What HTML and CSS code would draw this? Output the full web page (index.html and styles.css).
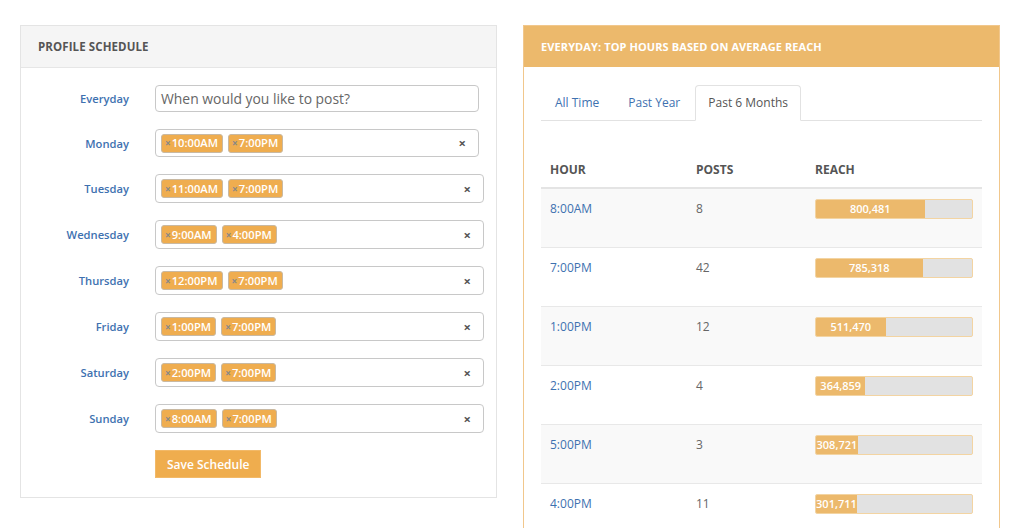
FILE: index.html
```html
<!DOCTYPE html>
<html>
<head>
<meta charset="utf-8">
<link rel="stylesheet" href="styles.css">
</head>
<body>
<div class="page">
  <section class="panel panel-default">
    <div class="panel-heading">PROFILE SCHEDULE</div>
    <div class="panel-body form">
      <div class="row">
        <label class="lbl">Everyday</label>
        <div class="input narrow"><span class="placeholder">When would you like to post?</span></div>
      </div>
      <div class="row">
        <label class="lbl">Monday</label>
        <div class="input select narrow h28"><span class="tag"><i>×</i>10:00AM</span><span class="tag"><i>×</i>7:00PM</span><span class="clear">×</span></div>
      </div>
      <div class="row">
        <label class="lbl">Tuesday</label>
        <div class="input select"><span class="tag"><i>×</i>11:00AM</span><span class="tag"><i>×</i>7:00PM</span><span class="clear">×</span></div>
      </div>
      <div class="row">
        <label class="lbl">Wednesday</label>
        <div class="input select"><span class="tag"><i>×</i>9:00AM</span><span class="tag"><i>×</i>4:00PM</span><span class="clear">×</span></div>
      </div>
      <div class="row">
        <label class="lbl">Thursday</label>
        <div class="input select"><span class="tag"><i>×</i>12:00PM</span><span class="tag"><i>×</i>7:00PM</span><span class="clear">×</span></div>
      </div>
      <div class="row">
        <label class="lbl">Friday</label>
        <div class="input select"><span class="tag"><i>×</i>1:00PM</span><span class="tag"><i>×</i>7:00PM</span><span class="clear">×</span></div>
      </div>
      <div class="row">
        <label class="lbl">Saturday</label>
        <div class="input select"><span class="tag"><i>×</i>2:00PM</span><span class="tag"><i>×</i>7:00PM</span><span class="clear">×</span></div>
      </div>
      <div class="row">
        <label class="lbl">Sunday</label>
        <div class="input select"><span class="tag"><i>×</i>8:00AM</span><span class="tag"><i>×</i>7:00PM</span><span class="clear">×</span></div>
      </div>
      <div class="row">
        <span></span>
        <div><button class="btn">Save Schedule</button></div>
      </div>
    </div>
  </section>

  <section class="panel panel-warning">
    <div class="panel-heading">EVERYDAY: TOP HOURS BASED ON AVERAGE REACH</div>
    <div class="panel-body">
      <ul class="tabs">
        <li class="tab">All Time</li>
        <li class="tab">Past Year</li>
        <li class="tab active">Past 6 Months</li>
      </ul>
      <table class="table">
        <thead>
          <tr><th class="c1">HOUR</th><th class="c2">POSTS</th><th class="c3">REACH</th></tr>
        </thead>
        <tbody>
          <tr class="odd"><td class="hour">8:00AM</td><td class="posts">8</td><td><div class="bar"><div class="fill" style="width:69.6%">800,481</div></div></td></tr>
          <tr><td class="hour">7:00PM</td><td class="posts">42</td><td><div class="bar"><div class="fill" style="width:68.3%">785,318</div></div></td></tr>
          <tr class="odd"><td class="hour">1:00PM</td><td class="posts">12</td><td><div class="bar"><div class="fill" style="width:44.6%">511,470</div></div></td></tr>
          <tr><td class="hour">2:00PM</td><td class="posts">4</td><td><div class="bar"><div class="fill" style="width:31.7%">364,859</div></div></td></tr>
          <tr class="odd"><td class="hour">5:00PM</td><td class="posts">3</td><td><div class="bar"><div class="fill" style="width:26.8%">308,721</div></div></td></tr>
          <tr><td class="hour">4:00PM</td><td class="posts">11</td><td><div class="bar"><div class="fill" style="width:26.2%">301,711</div></div></td></tr>
        </tbody>
      </table>
    </div>
  </section>
</div>
</body>
</html>
```

FILE: styles.css
```css
* { box-sizing: border-box; }
html, body { margin: 0; padding: 0; background: #fff; }
body {
  font-family: "Open Sans", "Noto Sans", sans-serif;
  font-size: 13px;
  color: #555;
  overflow: hidden;
  height: 528px;
}
.page {
  display: grid;
  grid-template-columns: 477px 477px;
  column-gap: 26px;
  align-items: start;
  padding: 25px 0 0 20px;
}
.panel {
  border: 1px solid #e4e4e4;
  background: #fff;
}
.panel-heading {
  height: 42px;
  display: flex;
  align-items: center;
  padding-left: 17px;
  font-size: 11px;
  font-weight: 700;
  letter-spacing: 0.1px;
}
.panel-default .panel-heading {
  background: #f5f5f5;
  border-bottom: 1px solid #e6e6e6;
  color: #555;
  font-size: 11.5px;
}
.panel-warning {
  border-color: #f1c78c;
}
.panel-warning .panel-heading {
  background: #ecb96c;
  color: #fff;
  height: 41px;
}

/* form */
.form {
  padding: 17px 0 19px 0;
  display: flex;
  flex-direction: column;
  gap: 17px;
}
.row {
  display: grid;
  grid-template-columns: 108px 1fr;
  column-gap: 26px;
  align-items: center;
}
.lbl {
  text-align: right;
  font-size: 11.2px;
  font-weight: 600;
  color: #3e71b0;
}
.input {
  position: relative;
  width: 329px;
  height: 29px;
  border: 1px solid #c8c8c8;
  border-radius: 4px;
  display: flex;
  align-items: center;
  padding: 0 5px;
  gap: 5px;
}
.input.narrow { width: 324px; }
.input.h28 { height: 28px; }
.row:first-child .input { height: 27px; }
.placeholder {
  color: #666;
  font-size: 13.9px;
  padding-left: 0;
}
.tag {
  display: inline-flex;
  align-items: center;
  height: 19px;
  padding: 0 4px 0 3px;
  background: #efad4f;
  border: 1px solid #c9b9a2;
  border-radius: 3px;
  color: #fff;
  font-size: 11.2px;
  font-weight: 600;
  line-height: 1;
}
.tag i {
  font-style: normal;
  font-size: 10px;
  color: #888;
  margin-right: 1px;
  font-weight: 700;
}
.clear {
  position: absolute;
  right: 12px;
  top: 50%;
  transform: translateY(-52%);
  font-size: 13px;
  font-weight: 700;
  color: #555;
}
.btn {
  font-family: inherit;
  height: 28px;
  padding: 0 11px;
  border: 1px solid #f2b968;
  background: #efad4e;
  color: #fff;
  font-size: 12px;
  font-weight: 600;
  border-radius: 0;
}

/* right panel */
.panel-warning .panel-body {
  padding: 18px 17px 0 17px;
}
.tabs {
  list-style: none;
  margin: 0;
  padding: 0;
  display: flex;
  border-bottom: 1px solid #e2e2e2;
  height: 36px;
}
.tab {
  height: 35px;
  padding: 0 12px 0 13px;
  margin-right: 2px;
  display: flex;
  align-items: center;
  color: #3e71b0;
  font-size: 12px;
  border: 1px solid transparent;
  border-radius: 4px 4px 0 0;
}
.tab.active {
  color: #555;
  background: #fff;
  border-color: #e2e2e2;
  border-bottom-color: #fff;
  height: 36px;
  padding: 0 12px 1px;
}
.table {
  width: 100%;
  border-collapse: collapse;
  margin-top: 29px;
  table-layout: fixed;
}
.c1 { width: 146px; }
.c2 { width: 119px; }
.table th {
  text-align: left;
  padding: 10px 9px 7px;
  line-height: 20px;
  font-size: 12px;
  font-weight: 700;
  color: #555;
  border-bottom: 2px solid #e4e4e4;
}
.table td {
  vertical-align: top;
  border-top: 1px solid #e8e8e8;
  padding: 10px 9px 9px 9px;
  line-height: 20px;
  font-size: 12px;
}
.table tr.odd td { background: #f9f9f9; }
.hour { color: #3e71b0; }
.posts { color: #666; }
.bar {
  height: 20px;
  margin-bottom: 19px;
  background: #e2e2e2;
  border: 1px solid #f3d4a2;
  border-radius: 2px;
  overflow: hidden;
}
.fill {
  height: 100%;
  background: #ecb96c;
  color: #fff;
  font-size: 11px;
  font-weight: 600;
  line-height: 18px;
  text-align: center;
  white-space: nowrap;
}
```
